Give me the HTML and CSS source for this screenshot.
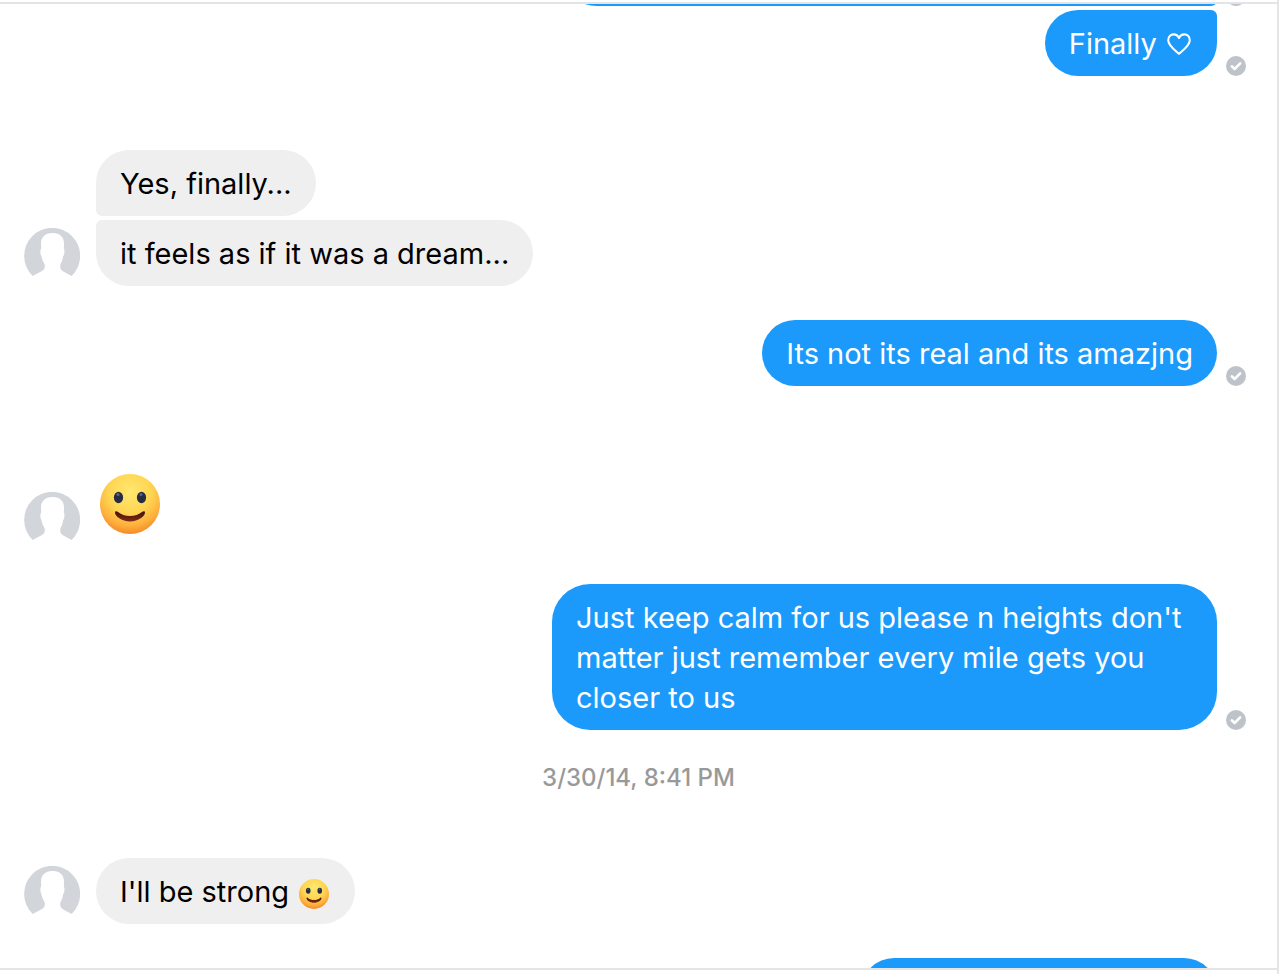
FILE: index.html
```html
<!DOCTYPE html>
<html lang="en">

<head>
    <meta charset="UTF-8">
    <meta name="viewport" content="width=device-width, initial-scale=1.0">
    <title>Messages</title>
    <link rel="stylesheet" href="styles.css">
</head>

<body>
    <!-- shared shapes -->
    <svg class="defs" width="0" height="0" aria-hidden="true">
        <defs>
            <radialGradient id="face" cx="0.5" cy="0.3" r="0.72">
                <stop offset="0" stop-color="#ffe870" />
                <stop offset="0.5" stop-color="#ffd552" />
                <stop offset="0.78" stop-color="#fdb03c" />
                <stop offset="1" stop-color="#f58424" />
            </radialGradient>
            <linearGradient id="mouth" x1="0" y1="0" x2="0" y2="1">
                <stop offset="0" stop-color="#3c1410" />
                <stop offset="1" stop-color="#842a12" />
            </linearGradient>
        </defs>
        <symbol id="smile" viewBox="0 0 60 60">
            <circle cx="30" cy="30" r="30" fill="url(#face)" />
            <ellipse cx="18.5" cy="23.5" rx="4.6" ry="5.8" fill="#262c44" />
            <ellipse cx="41.5" cy="23.5" rx="4.6" ry="5.8" fill="#262c44" />
            <circle cx="18" cy="20.5" r="1.5" fill="#56648c" />
            <circle cx="41" cy="20.5" r="1.5" fill="#56648c" />
            <path d="M15 38.500C15 37 16.500 36.800 17.700 37.800C24 43.500 36 43.500 42.300 37.800C43.500 36.800 45 37 45 38.500C45 42 38.500 47.500 30 47.500S15 42 15 38.500Z" fill="url(#mouth)" />
        </symbol>
        <symbol id="person" viewBox="0 0 56 56">
            <path fill="#d2d5da" d="M8.700 48A28 28 0 1 1 47.600 48L38.500 43C36 41.500 36 39 36.500 36C38 34 38.800 31 39 28.500C40.500 27 41 22 39.800 20.500C40.300 15 40 10 37 8C34.500 5 31 4.700 28 5C21 5 16.800 9.500 17 16L17.200 20.500C15.800 22 16.400 27 17.600 28.500C18 31 19 34 20.600 36C21 39 21 41.500 18 43Z" />
        </symbol>
        <symbol id="check" viewBox="0 0 20 20">
            <circle cx="10" cy="10" r="10" fill="#bec2c9" />
            <path d="M5.800 10.300l2.800 2.700 5.600-5.600" fill="none" stroke="#fff" stroke-width="2.600" stroke-linecap="round" stroke-linejoin="round" />
        </symbol>
    </svg>

    <main class="window">
        <section class="thread">
            <div class="group outgoing clipped-top">
                <div class="row">
                    <div class="bubble tall first"></div>
                    <svg class="check" role="img" aria-label="Sent"><use href="#check" /></svg>
                </div>
                <div class="row">
                    <div class="bubble last">Finally <svg class="heart" viewBox="0 0 24 22" role="img" aria-label="heart"><path d="M12 20.800C8 17.300 1.200 12.500 1.200 7.200C1.200 3.800 3.600 1.400 6.600 1.400C9 1.400 11 2.700 12 5C13 2.700 15 1.400 17.400 1.400C20.400 1.400 22.800 3.800 22.800 7.200C22.800 12.500 16 17.300 12 20.800Z" fill="none" stroke="#fff" stroke-width="2.100" stroke-linejoin="round" /></svg></div>
                    <svg class="check" role="img" aria-label="Sent"><use href="#check" /></svg>
                </div>
            </div>

            <div class="group incoming">
                <svg class="avatar" aria-hidden="true"><use href="#person" /></svg>
                <div class="bubbles">
                    <div class="bubble first">Yes, finally...</div>
                    <div class="bubble last">it feels as if it was a dream...</div>
                </div>
            </div>

            <div class="group outgoing">
                <div class="row">
                    <div class="bubble">Its not its real and its amazjng</div>
                    <svg class="check" role="img" aria-label="Sent"><use href="#check" /></svg>
                </div>
            </div>

            <div class="group incoming">
                <svg class="avatar" aria-hidden="true"><use href="#person" /></svg>
                <div class="sticker">
                    <svg class="emoji-large" role="img" aria-label="smile"><use href="#smile" /></svg>
                </div>
            </div>

            <div class="group outgoing">
                <div class="row">
                    <div class="bubble tall">Just keep calm for us please n heights don't matter just remember every mile gets you closer to us</div>
                    <svg class="check" role="img" aria-label="Sent"><use href="#check" /></svg>
                </div>
            </div>

            <time class="timestamp">3/30/14, 8:41 PM</time>

            <div class="group incoming">
                <svg class="avatar" aria-hidden="true"><use href="#person" /></svg>
                <div class="bubbles">
                    <div class="bubble">I'll be strong <svg class="emoji" role="img" aria-label="smile"><use href="#smile" /></svg></div>
                </div>
            </div>

            <div class="group outgoing">
                <div class="row">
                    <div class="bubble next"></div>
                    <svg class="check" role="img" aria-label="Sent"><use href="#check" /></svg>
                </div>
            </div>
        </section>
    </main>
</body>

</html>
```
FILE: styles.css
```css
* {
    box-sizing: border-box;
}

body {
    margin: 0;
    background: #fff;
    color: #000;
    font-family: Inter, "Liberation Sans", sans-serif;
    font-size: 29px;
    line-height: 40px;
}

.defs {
    position: absolute;
}

.window {
    display: flex;
    flex-direction: column;
    height: 100vh;
    padding: 2px 0 4px;
    margin-right: 1px;
    border-right: 2px solid #e5e5e5;
}

.thread {
    flex: 1;
    min-height: 0;
    display: flex;
    flex-direction: column;
    overflow: hidden;
    border-top: 2px solid #e2e4e6;
    border-bottom: 2px solid #e5e5e5;
}

/* groups */
.group {
    flex-shrink: 0;
    margin-top: 34px;
}

.outgoing {
    display: flex;
    flex-direction: column;
    gap: 4px;
    padding-right: 31px;
}

.row {
    display: flex;
    justify-content: flex-end;
    align-items: flex-end;
    gap: 9px;
}

.incoming {
    display: flex;
    align-items: flex-end;
    gap: 16px;
    padding: 40px 24px 0;
}

.bubbles {
    display: flex;
    flex-direction: column;
    align-items: flex-start;
    gap: 4px;
}

/* bubbles */
.bubble {
    min-height: 66px;
    padding: 14px 24px 12px;
    border-radius: 33px;
    background: #efefef;
}

.outgoing .bubble {
    max-width: 665px;
    background: #1b9afc;
    color: #fff;
}

.outgoing .tall {
    border-radius: 38px;
}

.incoming .first {
    border-bottom-left-radius: 6px;
}

.incoming .last {
    border-top-left-radius: 6px;
}

.outgoing .first {
    border-bottom-right-radius: 6px;
}

.outgoing .last {
    border-top-right-radius: 6px;
}

/* messages scrolled partly out of view */
.clipped-top {
    margin-top: -104px;
}

.clipped-top .first {
    width: 658px;
    height: 106px;
}

.next {
    width: 356px;
}

/* icons */
.avatar {
    flex-shrink: 0;
    width: 56px;
    height: 56px;
    margin-bottom: 2px;
}

.check {
    flex-shrink: 0;
    width: 20px;
    height: 20px;
}

.heart {
    width: 24px;
    height: 22px;
    margin: 0 2px;
    vertical-align: -1px;
}

.emoji {
    width: 30px;
    height: 30px;
    margin: 0 2px;
    vertical-align: -7px;
}

.sticker {
    padding: 14px 4px 16px;
}

.emoji-large {
    display: block;
    width: 60px;
    height: 60px;
}

.timestamp {
    flex-shrink: 0;
    margin-top: 38px;
    color: #999;
    font-size: 24px;
    font-weight: 500;
    line-height: 20px;
    text-align: center;
}

.timestamp + .group {
    margin-top: 30px;
}
```
